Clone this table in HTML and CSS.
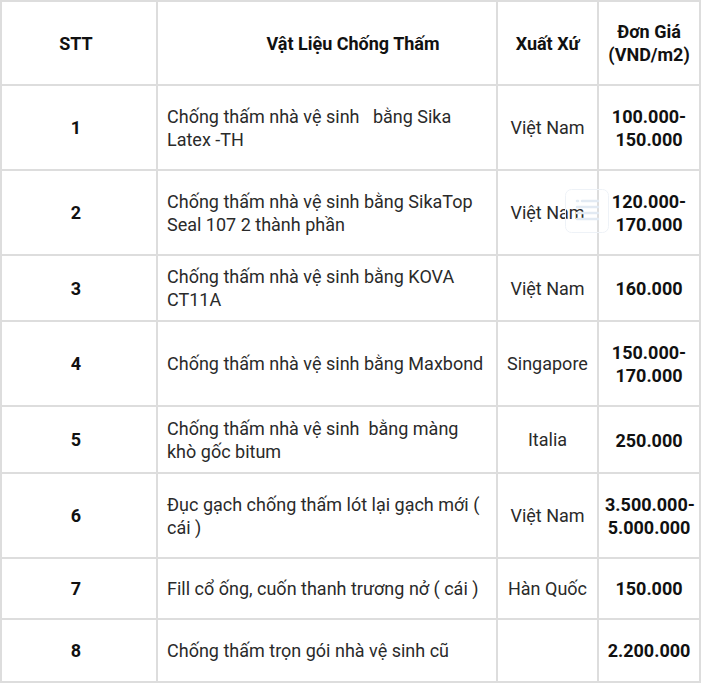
FILE: index.html
```html
<!DOCTYPE html>
<html lang="vi">
<head>
<meta charset="utf-8">
<title>Bảng giá chống thấm nhà vệ sinh</title>
<link rel="stylesheet" href="styles.css">
</head>
<body>
<div class="wrap">
<table class="price-table">
  <colgroup>
    <col class="c-stt">
    <col class="c-name">
    <col class="c-origin">
    <col class="c-price">
  </colgroup>
  <thead>
    <tr>
      <th class="stt">STT</th>
      <th class="name-h">Vật Liệu Chống Thấm</th>
      <th class="origin-h">Xuất Xứ</th>
      <th class="price">Đơn Giá (VND/m2)</th>
    </tr>
  </thead>
  <tbody>
    <tr>
      <td class="stt">1</td>
      <td class="name">Chống thấm nhà vệ sinh &nbsp; bằng Sika Latex -TH</td>
      <td class="origin">Việt Nam</td>
      <td class="price">100.000-150.000</td>
    </tr>
    <tr>
      <td class="stt">2</td>
      <td class="name">Chống thấm nhà vệ sinh bằng SikaTop Seal 107 2 thành phần</td>
      <td class="origin">Việt Nam</td>
      <td class="price">120.000-170.000</td>
    </tr>
    <tr>
      <td class="stt">3</td>
      <td class="name">Chống thấm nhà vệ sinh bằng KOVA CT11A</td>
      <td class="origin">Việt Nam</td>
      <td class="price">160.000</td>
    </tr>
    <tr>
      <td class="stt">4</td>
      <td class="name">Chống thấm nhà vệ sinh bằng Maxbond</td>
      <td class="origin">Singapore</td>
      <td class="price">150.000-170.000</td>
    </tr>
    <tr>
      <td class="stt">5</td>
      <td class="name tall">Chống thấm nhà vệ sinh &nbsp;bằng màng khò gốc bitum</td>
      <td class="origin">Italia</td>
      <td class="price">250.000</td>
    </tr>
    <tr>
      <td class="stt">6</td>
      <td class="name">Đục gạch chống thấm lót lại gạch mới ( cái )</td>
      <td class="origin">Việt Nam</td>
      <td class="price">3.500.000-5.000.000</td>
    </tr>
    <tr>
      <td class="stt">7</td>
      <td class="name">Fill cổ ống, cuốn thanh trương nở ( cái )</td>
      <td class="origin">Hàn Quốc</td>
      <td class="price short">150.000</td>
    </tr>
    <tr>
      <td class="stt">8</td>
      <td class="name">Chống thấm trọn gói nhà vệ sinh cũ</td>
      <td class="origin"></td>
      <td class="price last">2.200.000</td>
    </tr>
  </tbody>
</table>
<div class="toc-btn" aria-hidden="true">
  <svg width="44" height="44" viewBox="0 0 44 44">
    <rect x="0.5" y="0.5" width="43" height="43" rx="6" fill="none" stroke="#eef2f7" stroke-width="1"/>
    <g stroke="#e2eaf3" stroke-width="2.5" stroke-linecap="round">
      <line x1="12" y1="12" x2="13" y2="12"/>
      <line x1="17" y1="12" x2="33" y2="12"/>
      <line x1="12" y1="18" x2="33" y2="18"/>
      <line x1="12" y1="24" x2="33" y2="24"/>
      <line x1="12" y1="30" x2="33" y2="30"/>
    </g>
  </svg>
</div>
</div>
</body>
</html>
```

FILE: styles.css
```css
html, body {
  margin: 0;
  padding: 0;
  background: #ffffff;
}

body {
  font-family: Roboto, "Liberation Sans", Arial, sans-serif;
  color: #2a2a2a;
}

.wrap {
  position: relative;
  width: 699px;
}

.price-table {
  width: 699px;
  border-collapse: collapse;
  table-layout: fixed;
  font-size: 18px;
  line-height: 23px;
}

.c-stt { width: 156px; }
.c-name { width: 340px; }
.c-origin { width: 101px; }
.c-price { width: 102px; }

.price-table th,
.price-table td {
  border: 2px solid #dddddd;
  padding: 9px 9px;
  vertical-align: middle;
}

.price-table th {
  font-weight: 700;
  color: #111111;
  text-align: center;
  padding-top: 18px;
  padding-bottom: 18px;
}

.price-table th.name-h {
  padding-left: 61px;
  padding-right: 9px;
}

.price-table .stt {
  text-align: center;
  font-weight: 700;
  color: #111111;
  padding-left: 3px;
  padding-right: 9px;
}

.name {
  text-align: left;
}

.price-table td.tall {
  padding-top: 10px;
  padding-bottom: 9px;
}

.origin {
  text-align: center;
}

.price-table .price {
  text-align: center;
  font-weight: 700;
  color: #111111;
  padding-top: 18px;
  padding-bottom: 18px;
  padding-left: 6px;
  padding-right: 6px;
}

.price-table td.price {
  padding-top: 19px;
  padding-bottom: 18px;
}

.price-table td.short {
  padding-top: 18px;
  padding-bottom: 18px;
}

.price-table td.last {
  padding-top: 19px;
  padding-bottom: 19px;
}

.toc-btn {
  position: absolute;
  left: 565px;
  top: 189px;
  width: 44px;
  height: 44px;
  pointer-events: none;
}

.toc-btn svg {
  display: block;
}
```
